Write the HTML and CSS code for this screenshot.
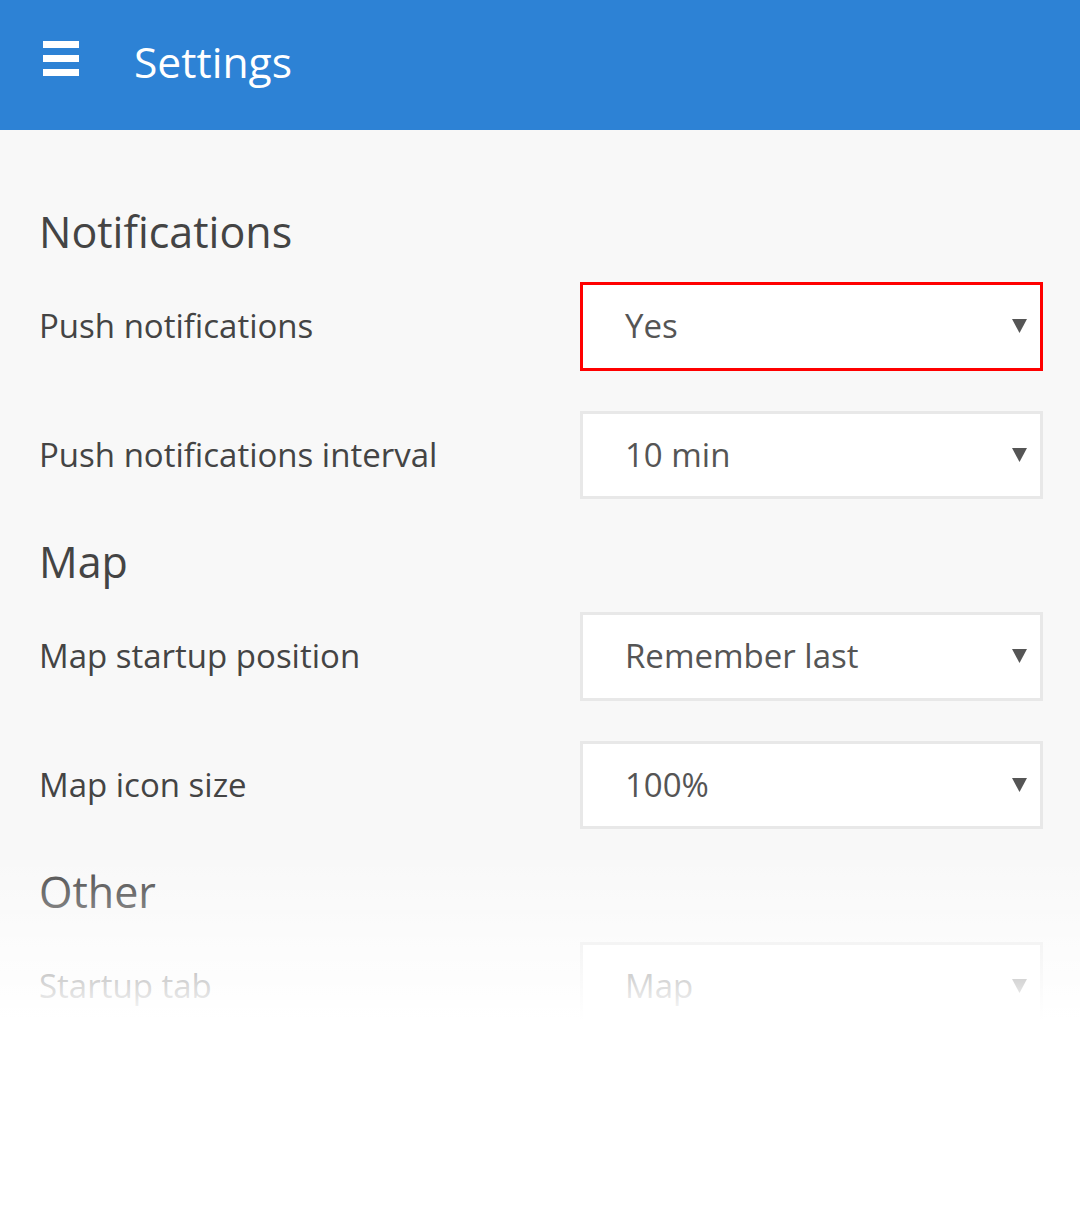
FILE: index.html
```html
<!DOCTYPE html>
<html lang="en">
<head>
<meta charset="utf-8">
<title>Settings</title>
<link rel="stylesheet" href="styles.css">
</head>
<body>
<header class="topbar">
  <div class="menu-icon" aria-label="Menu">
    <span class="bar"></span>
    <span class="bar"></span>
    <span class="bar"></span>
  </div>
  <h1 class="title">Settings</h1>
</header>
<main class="content">
  <section class="group">
    <h2 class="group-title">Notifications</h2>
    <div class="row">
      <div class="label">Push notifications</div>
      <div class="select select-active">
        <span class="value">Yes</span>
        <svg class="caret" viewBox="0 0 15 14" width="15" height="14"><polygon points="0,0 15,0 7.5,14"/></svg>
      </div>
    </div>
    <div class="row">
      <div class="label">Push notifications interval</div>
      <div class="select">
        <span class="value">10 min</span>
        <svg class="caret" viewBox="0 0 15 14" width="15" height="14"><polygon points="0,0 15,0 7.5,14"/></svg>
      </div>
    </div>
  </section>
  <section class="group">
    <h2 class="group-title">Map</h2>
    <div class="row">
      <div class="label">Map startup position</div>
      <div class="select">
        <span class="value">Remember last</span>
        <svg class="caret" viewBox="0 0 15 14" width="15" height="14"><polygon points="0,0 15,0 7.5,14"/></svg>
      </div>
    </div>
    <div class="row">
      <div class="label">Map icon size</div>
      <div class="select">
        <span class="value">100%</span>
        <svg class="caret" viewBox="0 0 15 14" width="15" height="14"><polygon points="0,0 15,0 7.5,14"/></svg>
      </div>
    </div>
  </section>
  <section class="group">
    <h2 class="group-title">Other</h2>
    <div class="row">
      <div class="label">Startup tab</div>
      <div class="select">
        <span class="value">Map</span>
        <svg class="caret" viewBox="0 0 15 14" width="15" height="14"><polygon points="0,0 15,0 7.5,14"/></svg>
      </div>
    </div>
  </section>
</main>
<div class="fade"></div>
</body>
</html>
```

FILE: styles.css
```css
html, body {
  margin: 0;
  padding: 0;
}

body {
  position: relative;
  min-height: 1211px;
  background: #ffffff;
  font-family: "Open Sans", "Noto Sans", "DejaVu Sans", sans-serif;
  color: #444444;
}

.topbar {
  display: flex;
  align-items: flex-start;
  height: 130px;
  box-sizing: border-box;
  padding-left: 43px;
  background: #2d82d5;
}

.menu-icon {
  display: flex;
  flex-direction: column;
  gap: 7px;
  width: 36px;
  margin-top: 41px;
}

.bar {
  display: block;
  height: 7px;
  background: #ffffff;
}

.title {
  margin: 32px 0 0 55px;
  font-size: 42.6px;
  font-weight: 400;
  line-height: 58px;
  color: #ffffff;
}

.content {
  background: #f8f8f8;
  padding: 77px 37px 0 39px;
  min-height: 1004px;
  box-sizing: border-box;
}

.group + .group {
  margin-top: 38px;
}

.group-title {
  margin: 0 0 25px 0;
  font-size: 43px;
  font-weight: 400;
  line-height: 50px;
  color: #444444;
}

.row {
  display: grid;
  grid-template-columns: 1fr 463px;
  align-items: center;
  height: 88.5px;
}

.row + .row {
  margin-top: 40px;
}

.label {
  font-size: 33px;
  line-height: 44px;
  color: #444444;
}

.select {
  display: flex;
  align-items: center;
  justify-content: space-between;
  height: 88.5px;
  box-sizing: border-box;
  border: 3px solid #e8e8e8;
  background: #ffffff;
  padding: 0 13px 0 42px;
}

.select-active {
  border-color: #ff0000;
}

.value {
  font-size: 33px;
  line-height: 44px;
  color: #555555;
}

.caret {
  display: block;
  fill: #555555;
}

.fade {
  position: absolute;
  left: 0;
  right: 0;
  top: 855px;
  bottom: 0;
  background: linear-gradient(to bottom, rgba(255, 255, 255, 0) 0, #ffffff 165px, #ffffff 100%);
}
```
